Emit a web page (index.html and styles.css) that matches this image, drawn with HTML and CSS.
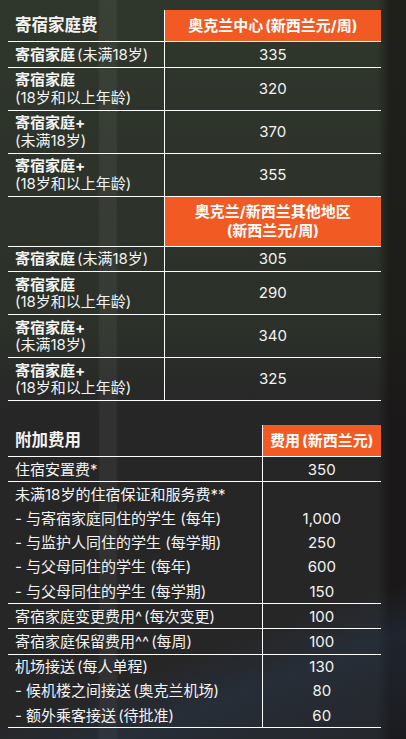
FILE: index.html
```html
<!DOCTYPE html>
<html lang="zh-CN">
<head>
<meta charset="utf-8">
<title>寄宿家庭费</title>
<link rel="stylesheet" href="styles.css">
</head>
<body>
<div class="page">
  <table class="fees t1">
    <colgroup><col class="c1a"><col class="c1b"></colgroup>
    <tr class="line">
      <th class="title">寄宿家庭费</th>
      <th class="orange val">奥克兰中心<span class="gap"></span>(新西兰元/周)</th>
    </tr>
    <tr class="line"><td><b>寄宿家庭</b><span class="gap"></span>(未满18岁)</td><td class="val">335</td></tr>
    <tr class="line"><td><b>寄宿家庭</b><br>(18岁和以上年龄)</td><td class="val">320</td></tr>
    <tr class="line"><td><b>寄宿家庭+</b><br>(未满18岁)</td><td class="val">370</td></tr>
    <tr class="line"><td><b>寄宿家庭+</b><br>(18岁和以上年龄)</td><td class="val">355</td></tr>
    <tr class="line">
      <td></td>
      <th class="orange val two">奥克兰/新西兰其他地区<br>(新西兰元/周)</th>
    </tr>
    <tr class="line"><td><b>寄宿家庭</b><span class="gap"></span>(未满18岁)</td><td class="val">305</td></tr>
    <tr class="line"><td><b>寄宿家庭</b><br>(18岁和以上年龄)</td><td class="val">290</td></tr>
    <tr class="line"><td><b>寄宿家庭+</b><br>(未满18岁)</td><td class="val">340</td></tr>
    <tr class="line"><td><b>寄宿家庭+</b><br>(18岁和以上年龄)</td><td class="val">325</td></tr>
  </table>

  <table class="fees t2">
    <colgroup><col class="c2a"><col class="c2b"></colgroup>
    <tr class="line">
      <th class="title">附加费用</th>
      <th class="orange val">费用<span class="gap"></span>(新西兰元)</th>
    </tr>
    <tr class="line"><td>住宿安置费*</td><td class="val">350</td></tr>
    <tr><td>未满18岁的住宿保证和服务费**</td><td class="val"></td></tr>
    <tr><td>- 与寄宿家庭同住的学生 (每年)</td><td class="val">1,000</td></tr>
    <tr><td>- 与监护人同住的学生 (每学期)</td><td class="val">250</td></tr>
    <tr><td>- 与父母同住的学生 (每年)</td><td class="val">600</td></tr>
    <tr class="line"><td>- 与父母同住的学生 (每学期)</td><td class="val">150</td></tr>
    <tr class="line"><td>寄宿家庭变更费用^<span class="gap"></span>(每次变更)</td><td class="val">100</td></tr>
    <tr class="line"><td>寄宿家庭保留费用^^<span class="gap"></span>(每周)</td><td class="val">100</td></tr>
    <tr><td>机场接送<span class="gap"></span>(每人单程)</td><td class="val">130</td></tr>
    <tr><td>- 候机楼之间接送<span class="gap"></span>(奥克兰机场)</td><td class="val">80</td></tr>
    <tr class="line"><td>- 额外乘客接送<span class="gap"></span>(待批准)</td><td class="val">60</td></tr>
  </table>
</div>
</body>
</html>
```
FILE: styles.css
```css
html, body {
  margin: 0;
  padding: 0;
}
body {
  width: 406px;
  height: 739px;
  overflow: hidden;
  font-family: "Inter", "Noto Sans CJK SC", sans-serif;
  color: #f3f3f3;
  background-color: #262627;
  background-image:
    linear-gradient(160deg, rgba(0,0,0,0) 0%, rgba(0,0,0,0) 82%, rgba(40,60,85,0.35) 88%, rgba(30,40,55,0.2) 100%),
    linear-gradient(90deg, rgba(0,0,0,0) 0%, rgba(0,0,0,0) 93%, rgba(15,10,10,0.5) 96%, rgba(15,10,10,0.5) 100%),
    linear-gradient(90deg, rgba(0,0,0,0) 0, rgba(0,0,0,0) 98px, rgba(255,255,255,0.05) 100px, rgba(255,255,255,0.05) 116px, rgba(0,0,0,0) 118px),
    linear-gradient(180deg, rgba(48,56,44,0.9) 0%, rgba(44,50,42,0.85) 45%, rgba(38,38,38,0.6) 56%, rgba(38,38,40,0) 62%);
}
.page {
  padding: 10px 25px 0 8px;
}
.fees {
  border-collapse: collapse;
  width: 373px;
  table-layout: fixed;
}
.t2 {
  margin-top: 24px;
}
.c1a { width: 156px; }
.c1b { width: 217px; }
.c2a { width: 254px; }
.c2b { width: 119px; }
.fees td, .fees th {
  padding: 3.5px 0 3.5px 7px;
  font-size: 15px;
  line-height: 17.5px;
  font-weight: 400;
  text-align: left;
  vertical-align: middle;
  white-space: nowrap;
}
.t2 td {
  line-height: 17.2px;
}
.gap {
  display: inline-block;
  width: 2px;
}
.fees b {
  font-weight: 700;
}
.fees .val {
  text-align: center;
  padding-left: 0;
  border-left: 1px solid #ffffff;
}
.fees tr.line td, .fees tr.line th {
  border-bottom: 1px solid #ffffff;
}
.fees th.title {
  font-size: 16.5px;
  font-weight: 700;
  padding-top: 6px;
  padding-bottom: 6px;
  line-height: 19px;
}
.fees th.orange {
  background: #f25a24;
  color: #ffffff;
  font-weight: 700;
  line-height: 19px;
  padding-top: 6px;
  padding-bottom: 6px;
}
.fees th.two {
  padding-top: 5.5px;
  padding-bottom: 5.5px;
}
```
